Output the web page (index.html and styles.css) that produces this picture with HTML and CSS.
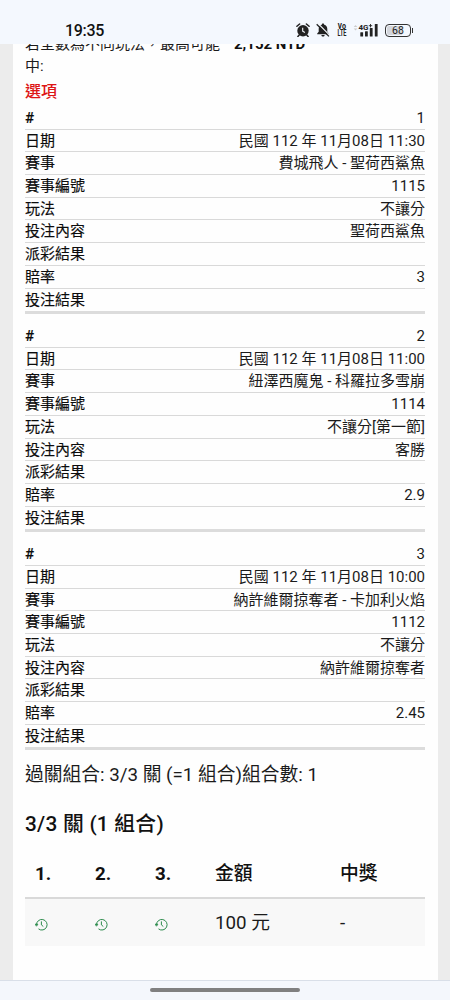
FILE: index.html
```html
<!DOCTYPE html>
<html lang="zh-Hant">
<head>
<meta charset="utf-8">
<title>選項</title>
<link rel="stylesheet" href="styles.css">
</head>
<body>
<div class="phone">
  <header class="status">
    <span class="clock">19:35</span>
    <div class="status-icons">
      <svg class="alarm" viewBox="0 0 14 14" width="14" height="14"><circle cx="7" cy="7.7" r="5.7" fill="#222"/><path d="M.9 3.3 3.6 1M13.1 3.3 10.4 1M3.2 12l-1.3 1.5M10.8 12l1.3 1.5" stroke="#222" stroke-width="1.5" stroke-linecap="round"/><path d="M6.7 4.8v3.4l2.2 1.3" fill="none" stroke="#f4f7fc" stroke-width="1.1"/></svg>
      <svg class="mute" viewBox="0 0 14 14" width="14" height="14"><path d="M7 .6c.8 0 1.2.5 1.2 1.2 2 .5 3.1 2 3.1 4.2v2.8l1.5 1.8v.7H1.2v-.7l1.5-1.8V6c0-2.2 1.1-3.7 3.1-4.2C5.8 1.1 6.2.6 7 .6zM5.4 12h3.2c0 1-.7 1.6-1.6 1.6S5.4 13 5.4 12z" fill="#222"/><path d="M1.8.4 14 12.6" stroke="#f4f7fc" stroke-width="1.3"/><path d="M.7 1.2 12.9 13.4" stroke="#222" stroke-width="1.3"/></svg>
      <svg class="volte" viewBox="0 0 10 14" width="10" height="14"><text x="0.5" y="6.4" textLength="8.5" lengthAdjust="spacingAndGlyphs">Vo</text><text x="0.5" y="13.2" textLength="9" lengthAdjust="spacingAndGlyphs">LTE</text></svg>
      <svg class="signal" viewBox="0 0 26 16" width="26" height="16"><path d="M.7 5 2.5 3 4.3 5zM.7 6.5h3.6L2.5 8.5z" fill="#ccc"/><g fill="#222"><rect x="7.3" y="10.3" width="2.8" height="4.2" rx=".5"/><rect x="12" y="9.3" width="2.8" height="5.2" rx=".5"/><rect x="16.8" y="6" width="2.8" height="8.5" rx=".5"/><rect x="21.8" y="2" width="2.8" height="12.5" rx=".5"/></g><text x="5.5" y="8" class="net">4G</text><path d="M15.8 3.7h3.4M17.5 2v3.4" stroke="#222" stroke-width=".9"/></svg>
      <span class="battery">68</span>
    </div>
  </header>

  <main class="sheet">
    <div class="summary"><span>若全數為不同玩法，最高可能中:</span><b>2,152 NTD</b></div>
    <h2 class="caption">選項</h2>

    <dl class="pick">
      <div><dt>#</dt><dd>1</dd></div>
      <div><dt>日期</dt><dd>民國 112 年 11月08日 11:30</dd></div>
      <div><dt>賽事</dt><dd>費城飛人 - 聖荷西鯊魚</dd></div>
      <div><dt>賽事編號</dt><dd>1115</dd></div>
      <div><dt>玩法</dt><dd>不讓分</dd></div>
      <div><dt>投注內容</dt><dd>聖荷西鯊魚</dd></div>
      <div><dt>派彩結果</dt><dd></dd></div>
      <div><dt>賠率</dt><dd>3</dd></div>
      <div><dt>投注結果</dt><dd></dd></div>
    </dl>
    <dl class="pick">
      <div><dt>#</dt><dd>2</dd></div>
      <div><dt>日期</dt><dd>民國 112 年 11月08日 11:00</dd></div>
      <div><dt>賽事</dt><dd>紐澤西魔鬼 - 科羅拉多雪崩</dd></div>
      <div><dt>賽事編號</dt><dd>1114</dd></div>
      <div><dt>玩法</dt><dd>不讓分[第一節]</dd></div>
      <div><dt>投注內容</dt><dd>客勝</dd></div>
      <div><dt>派彩結果</dt><dd></dd></div>
      <div><dt>賠率</dt><dd>2.9</dd></div>
      <div><dt>投注結果</dt><dd></dd></div>
    </dl>
    <dl class="pick">
      <div><dt>#</dt><dd>3</dd></div>
      <div><dt>日期</dt><dd>民國 112 年 11月08日 10:00</dd></div>
      <div><dt>賽事</dt><dd>納許維爾掠奪者 - 卡加利火焰</dd></div>
      <div><dt>賽事編號</dt><dd>1112</dd></div>
      <div><dt>玩法</dt><dd>不讓分</dd></div>
      <div><dt>投注內容</dt><dd>納許維爾掠奪者</dd></div>
      <div><dt>派彩結果</dt><dd></dd></div>
      <div><dt>賠率</dt><dd>2.45</dd></div>
      <div><dt>投注結果</dt><dd></dd></div>
    </dl>

    <p class="combo">過關組合: 3/3 關 (=1 組合)組合數: 1</p>
    <h3 class="combo-title">3/3 關 (1 組合)</h3>
    <div class="table">
      <div class="tr head"><span>1.</span><span>2.</span><span>3.</span><span>金額</span><span>中獎</span></div>
      <div class="tr body">
        <span><svg class="pending" viewBox="0 0 13 13" width="13" height="13"><path d="M1.5 7A5.3 5.3 0 1 1 3.5 10.9M.2 6.2h2.7L1.5 8.2z"/><path d="M6.4 3.4v3.5l1.9 1.6"/></svg></span>
        <span><svg class="pending" viewBox="0 0 13 13" width="13" height="13"><path d="M1.5 7A5.3 5.3 0 1 1 3.5 10.9M.2 6.2h2.7L1.5 8.2z"/><path d="M6.4 3.4v3.5l1.9 1.6"/></svg></span>
        <span><svg class="pending" viewBox="0 0 13 13" width="13" height="13"><path d="M1.5 7A5.3 5.3 0 1 1 3.5 10.9M.2 6.2h2.7L1.5 8.2z"/><path d="M6.4 3.4v3.5l1.9 1.6"/></svg></span>
        <span>100 元</span><span>-</span>
      </div>
    </div>
  </main>

  <footer class="navbar"><i class="handle"></i></footer>
</div>
</body>
</html>
```

FILE: styles.css
```css
* { box-sizing: border-box; }
body {
  margin: 0;
  background: #ececec;
  color: #1b1b1b;
  font-family: Roboto, "Noto Sans CJK TC", sans-serif;
}
.phone {
  width: 450px;
  height: 1000px;
  display: grid;
  grid-template-rows: 44px 936px 20px;
  overflow: hidden;
}
.status {
  background: #f4f8fe;
  display: flex;
  justify-content: space-between;
  align-items: flex-start;
  padding: 20px 37px 0 65px;
}
.clock {
  font: 500 16px/21px Roboto, sans-serif;
  letter-spacing: -0.3px;
  color: #111;
}
.status-icons { display: flex; align-items: center; height: 20px; }
.mute { margin-left: 6px; }
.volte {
  margin-left: 7px;
  font: 700 8.5px Roboto, sans-serif;
  fill: #222;
}
.signal { margin-left: 6px; }
.net { font: 700 8px Roboto, sans-serif; fill: #222; }
.battery {
  position: relative;
  width: 26px;
  height: 13px;
  margin-left: 6px;
  margin-right: 2px;
  border: 1px solid #333;
  border-radius: 4px;
  background: linear-gradient(90deg, #d3d6dc 68%, #f4f8fe 68%);
  box-shadow: inset 0 0 0 1px #f4f8fe;
  font: 10.5px/11px Roboto, sans-serif;
  text-align: center;
  color: #222;
}
.battery::after {
  content: "";
  position: absolute;
  right: -3px;
  top: 3px;
  width: 1px;
  height: 5px;
  background: #333;
}
.sheet {
  margin: 0 12.5px;
  padding: 0 12.5px;
  background: #fefefe;
  overflow: hidden;
}
.summary {
  display: flex;
  gap: 9px;
  margin-top: -11px;
  height: 47.5px;
  font-size: 15px;
  line-height: 22px;
}
.summary span { width: 200px; }
.summary b { font-weight: 700; color: #111; }
.caption {
  margin: 0;
  height: 26.5px;
  font-size: 16px;
  line-height: 22px;
  font-weight: 500;
  color: #dd1515;
}
.pick { margin: 0 0 11.3px; font-size: 15px; }
.pick div {
  display: flex;
  justify-content: space-between;
  height: 22.7px;
  line-height: 22.3px;
  border-bottom: 1px solid #d9d9d9;
}
.pick div:last-child { height: 25.3px; border-bottom: 3.5px solid #dcdcdc; }
.pick dt {
  color: #0c0c0c;
  -webkit-text-stroke: 0.15px #0c0c0c;
}
.pick div:first-child dt { font-weight: 500; }
.pick dd { margin: 0; }
.combo { margin: 0; font-size: 18.75px; line-height: 28px; }
.combo-title {
  margin: 20px 0 0;
  font-size: 20.8px;
  line-height: 31px;
  font-weight: 500;
  color: #111;
  letter-spacing: 0.25px;
}
.table { margin-top: 6.5px; font-size: 18.75px; line-height: 28px; }
.tr { display: grid; grid-template-columns: 60px 60px 60px 125px 95px; align-items: center; }
.tr span { padding-left: 10px; }
.head {
  height: 52px;
  padding-top: 4px;
  align-items: baseline;
  align-content: center;
  border-bottom: 2px solid #d9d9d9;
  font-weight: 500;
  color: #111;
}
.head span:nth-child(-n+3) { font-weight: 700; }
.body { height: 47.5px; background: #f8f8f8; }
.body span:nth-child(n+4) { padding-top: 1px; }
.pending { display: block; margin-top: 3px; fill: none; stroke: #2c8b4c; stroke-width: 1; }
.navbar {
  background: #f4f7fc;
  border-top: 1px solid #d9dfe8;
  display: flex;
  justify-content: center;
  padding-top: 7px;
}
.handle { width: 150px; height: 4px; border-radius: 2px; background: #808080; }
```
